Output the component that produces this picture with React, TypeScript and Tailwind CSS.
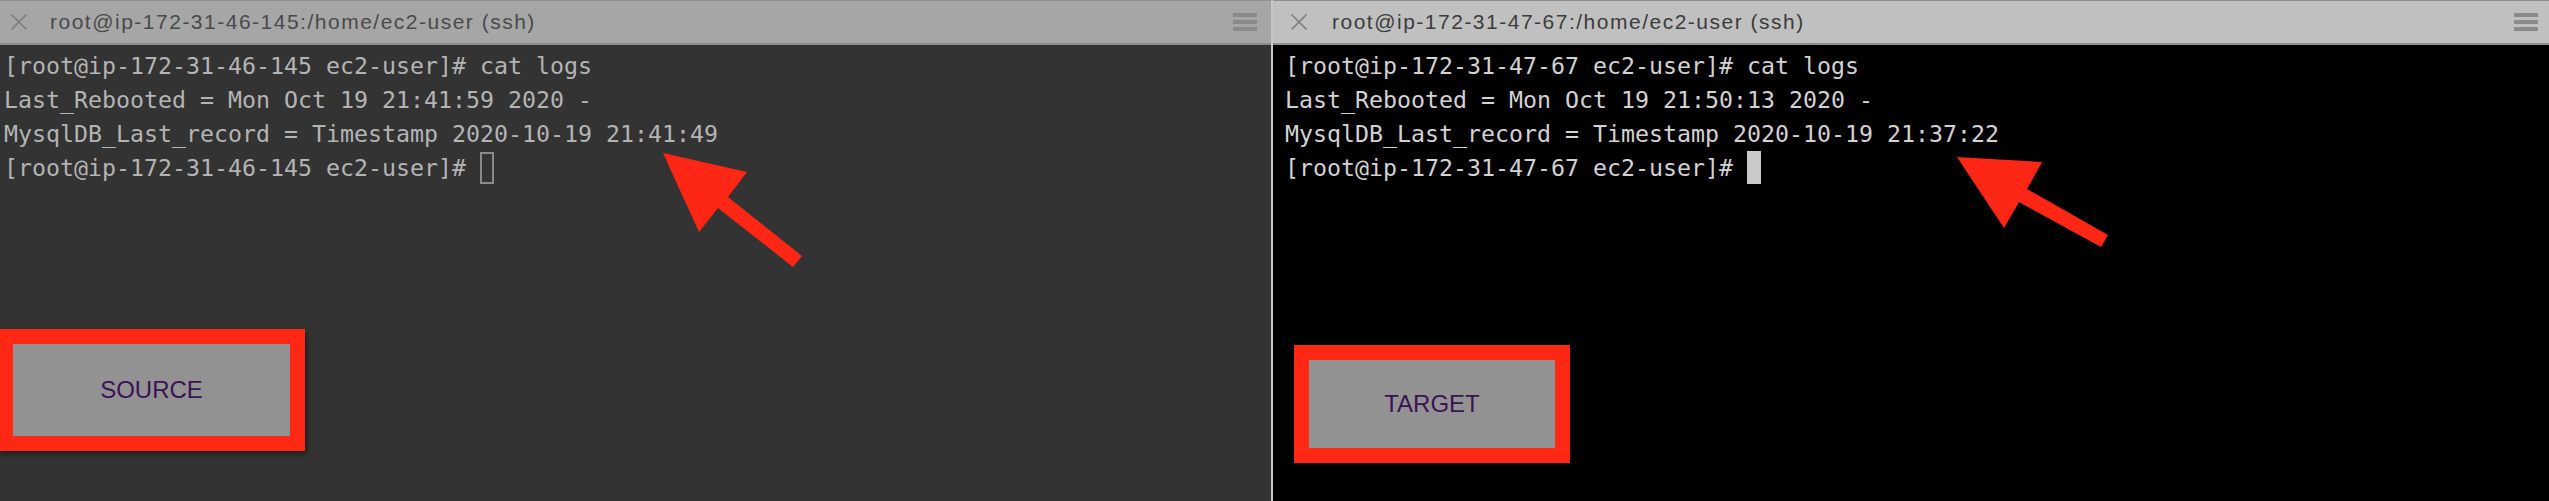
import React from "react";

function XIcon() {
  return (
    <svg width="18" height="18" viewBox="0 0 18 18" className="shrink-0">
      <path d="M1.5 1.5 L16.5 16.5 M16.5 1.5 L1.5 16.5" stroke="#7c7c7c" strokeWidth="1.6" fill="none" />
    </svg>
  );
}

function Burger() {
  return (
    <div className="flex flex-col gap-[3px] w-[24px]">
      <div className="h-[4px] bg-[#8a8a8a]" />
      <div className="h-[4px] bg-[#8a8a8a]" />
      <div className="h-[4px] bg-[#8a8a8a]" />
    </div>
  );
}

export default function App() {
  return (
    <div className="relative w-[2549px] h-[501px] flex overflow-hidden bg-[#333333]">
      {/* Left pane */}
      <div className="w-[1271px] h-full flex flex-col bg-[#333333]">
        <div className="h-[45px] flex items-center bg-[#a6a6a6] border-t border-t-[#8e8e8e] border-b-2 border-b-[#8b8b8b] pl-[10px] pr-[14px]">
          <XIcon />
          <div className="ml-[22px] text-[21px] tracking-[1.5px] text-[#4a4a4a] font-['Liberation_Sans',Arial,sans-serif] whitespace-pre">
            root@ip-172-31-46-145:/home/ec2-user (ssh)
          </div>
          <div className="flex-1" />
          <Burger />
        </div>
        <div className="flex-1 flex flex-col pl-[4px] pt-[4px] font-['DejaVu_Sans_Mono',monospace] text-[23.25px] leading-[34px] text-[#b4b4b4] whitespace-pre">
          <div>[root@ip-172-31-46-145 ec2-user]# cat logs</div>
          <div>Last_Rebooted = Mon Oct 19 21:41:59 2020 -</div>
          <div>MysqlDB_Last_record = Timestamp 2020-10-19 21:41:49</div>
          <div>
            [root@ip-172-31-46-145 ec2-user]#{" "}
            <span className="inline-block align-top mt-[1px] w-[14px] h-[32px] border-2 border-[#8a8a8a]" />
          </div>
          <div className="mt-[144px] -ml-[6px] w-[307px] h-[122px] border-[15px] border-[#fe2814] bg-[#929292] flex items-center justify-center shadow-[2px_3px_5px_rgba(0,0,0,0.45)]">
            <span className="font-['Liberation_Sans',Arial,sans-serif] text-[24px] leading-none text-[#3b1352]">SOURCE</span>
          </div>
        </div>
      </div>

      {/* Divider */}
      <div className="w-[2px] h-full bg-[#c6c6c6]" />

      {/* Right pane */}
      <div className="flex-1 h-full flex flex-col bg-black">
        <div className="h-[45px] flex items-center bg-[#c0c0c0] border-t border-t-[#8e8e8e] border-b-2 border-b-[#8d8d8d] pl-[17px] pr-[11px]">
          <XIcon />
          <div className="ml-[24px] text-[21px] tracking-[1.5px] text-[#3c3c3c] font-['Liberation_Sans',Arial,sans-serif] whitespace-pre">
            root@ip-172-31-47-67:/home/ec2-user (ssh)
          </div>
          <div className="flex-1" />
          <Burger />
        </div>
        <div className="flex-1 flex flex-col pl-[12px] pt-[4px] font-['DejaVu_Sans_Mono',monospace] text-[23.25px] leading-[34px] text-[#d2d2d2] whitespace-pre">
          <div>[root@ip-172-31-47-67 ec2-user]# cat logs</div>
          <div>Last_Rebooted = Mon Oct 19 21:50:13 2020 -</div>
          <div>MysqlDB_Last_record = Timestamp 2020-10-19 21:37:22</div>
          <div>
            [root@ip-172-31-47-67 ec2-user]#{" "}
            <span className="inline-block align-top w-[14px] h-[33px] bg-[#cacaca]" />
          </div>
          <div className="mt-[160px] ml-[9px] w-[276px] h-[118px] border-[15px] border-[#fe2814] bg-[#929292] flex items-center justify-center">
            <span className="font-['Liberation_Sans',Arial,sans-serif] text-[24px] leading-none text-[#3b1352]">TARGET</span>
          </div>
        </div>
      </div>

      {/* Annotation arrows */}
      <svg className="absolute inset-0 pointer-events-none" width="2549" height="501" viewBox="0 0 2549 501">
        <polygon points="663,153 747,172 728,197 802,256 793,267 718,208 699,232" fill="#fe2614" />
        <polygon points="1957,157 2042,162 2027,189 2108,235 2101,247 2019,202 2004,228" fill="#fe2614" />
      </svg>
    </div>
  );
}
